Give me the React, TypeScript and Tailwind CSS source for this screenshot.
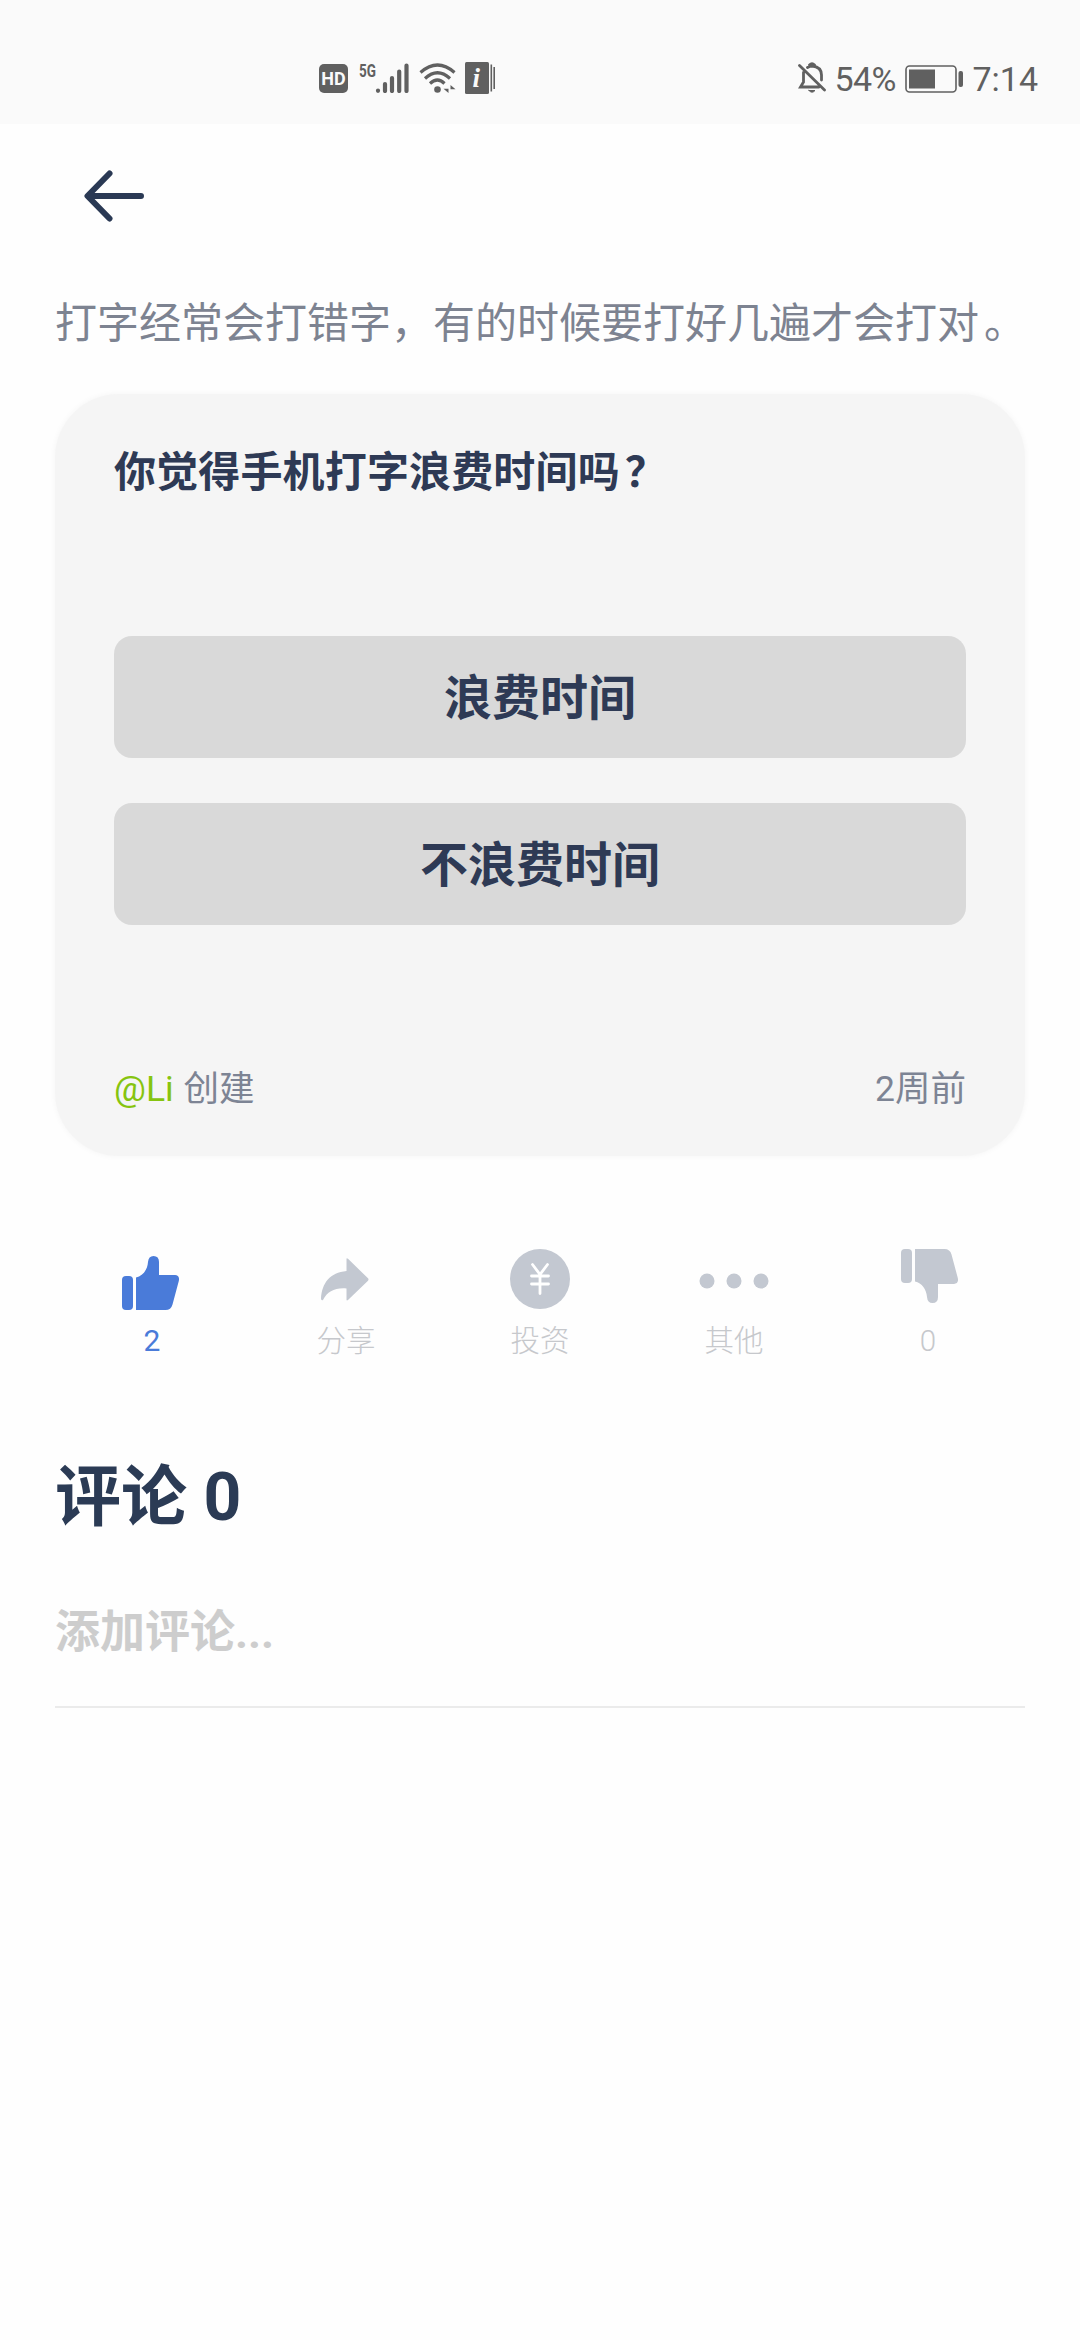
import React from 'react';

interface IconProps {
  className?: string;
}

interface Action {
  label: string;
  icon: React.ReactNode;
  active?: boolean;
}

const SignalIcon: React.FC<IconProps> = ({ className }) => (
  <svg viewBox="0 0 34 30" className={className} fill="none" stroke="currentColor" strokeWidth="4.200" strokeLinecap="round">
    <path d="M3 27.600v.2M10 21v7M17 15v13M24.200 8.500v19.500M31.500 2.500v25.500" />
  </svg>
);

const WifiIcon: React.FC<IconProps> = ({ className }) => (
  <svg viewBox="0 0 38 30" className={className} fill="none" stroke="currentColor" strokeWidth="3.200">
    <path d="M1.500 9.500Q18.500-5.500 35.500 9.500M6 15.500Q18.500 4 31 15.500M11 20.500Q18.500 13.500 25.500 20.500" />
    <circle cx="18.500" cy="26.500" r="3.300" fill="currentColor" stroke="none" />
    <path d="M29.500 22v8l-5-4.200h5zM31.500 30v-8l5 4.200h-5z" fill="currentColor" stroke="none" />
  </svg>
);

const InfoCardIcon: React.FC<IconProps> = ({ className }) => (
  <svg viewBox="0 0 30 32" className={className} fill="currentColor">
    <rect x="0" y="0" width="24" height="32" rx="1.500" />
    <rect x="25.500" y="2.500" width="1.600" height="27" />
    <rect x="28.400" y="5" width="1.600" height="22" />
    <text x="7.500" y="25" fill="#fafafa" className="font-['Liberation_Serif'] text-[27px] font-bold italic">i</text>
  </svg>
);

const BellOffIcon: React.FC<IconProps> = ({ className }) => (
  <svg viewBox="0 0 28 32" className={className} fill="none" stroke="currentColor" strokeWidth="2.800" strokeLinecap="round">
    <path d="M5.500 10.500V20L2.500 25H21M9.500 5.500Q12 4 14 4Q23.500 5 23.500 13v5M11.500 3Q14 .500 16.500 3M1.500 3.500L26.500 28" />
    <path d="M11 28.500h6q-3 3.500-6 0z" fill="currentColor" strokeWidth="1" />
  </svg>
);

const BatteryIcon: React.FC<IconProps> = ({ className }) => (
  <svg viewBox="0 0 59 28" className={className} fill="currentColor">
    <rect x="1" y="1" width="50" height="26" rx="3.500" fill="none" stroke="currentColor" strokeWidth="1.600" />
    <rect x="4" y="4.500" width="26" height="19" />
    <rect x="53.500" y="6" width="4.500" height="16" rx="2" />
  </svg>
);

const BackIcon: React.FC<IconProps> = ({ className }) => (
  <svg viewBox="0 0 60 52" className={className} fill="none" stroke="currentColor" strokeWidth="6" strokeLinecap="round" strokeLinejoin="round">
    <path d="M57 26H4M25.500 3.500L3.500 26l22 22.500" />
  </svg>
);

const ThumbIcon: React.FC<IconProps> = ({ className }) => (
  <svg viewBox="0 0 57 54" className={className} fill="currentColor">
    <rect x="0" y="20" width="11" height="34" rx="4" />
    <path d="M14 54V21.500C21 20 25.500 13.500 26 6Q26.500 0 31.500 0Q37 0 37 6V19H53Q58 19.500 56.800 25L50.500 48.500Q49 54 43.500 54Z" />
  </svg>
);

const ShareIcon: React.FC<IconProps> = ({ className }) => (
  <svg viewBox="0 0 48 43" className={className} fill="currentColor">
    <path d="M25.500 1Q25.500-.500 27 .800L47 20.300Q48 21.500 47 22.700L27 42Q25.500 43 25.500 41.500V30.500C14 29.500 6.500 33.500 2 42Q0 43 0 40.500C1 25 9 14.500 25.500 13Z" />
  </svg>
);

const YenIcon: React.FC<IconProps> = ({ className }) => (
  <svg viewBox="0 0 60 60" className={className}>
    <circle cx="30" cy="30" r="30" fill="currentColor" />
    <path d="M22.500 15.500l7.500 10 7.500-10M30 26v18.500M21.500 27h17M21.500 35h17" fill="none" stroke="#fff" strokeWidth="2.800" strokeLinecap="round" />
  </svg>
);

const MoreIcon: React.FC<IconProps> = ({ className }) => (
  <svg viewBox="0 0 70 16" className={className} fill="currentColor">
    <circle cx="8" cy="8" r="7.500" />
    <circle cx="35" cy="8" r="7.500" />
    <circle cx="62" cy="8" r="7.500" />
  </svg>
);

const actions: Action[] = [
  { label: '2', icon: <ThumbIcon className="w-[57px] h-[54px] mt-[7px] mr-[3px]" />, active: true },
  { label: '分享', icon: <ShareIcon className="w-12 h-[43px] mt-[9px] mr-0.5" /> },
  { label: '投资', icon: <YenIcon className="w-[60px] h-[60px]" /> },
  { label: '其他', icon: <MoreIcon className="w-[70px] h-4 mt-6" /> },
  { label: '0', icon: <ThumbIcon className="w-[57px] h-[54px] ml-0.5 -scale-y-100" /> },
];

const options = ['浪费时间', '不浪费时间'];

const StatusBar: React.FC = () => (
  <div className="flex h-[124px] items-start bg-[#fafafa] pl-[319px] pr-[42px] pt-[62px] text-[#606060]">
    <div className="mt-0.5 flex h-[29px] w-[29px] items-center justify-center rounded-[5px] bg-[#606060] font-['Roboto'] text-[18px] font-bold text-[#fafafa]">HD</div>
    <span className="ml-[11px] w-5 origin-left scale-x-75 whitespace-nowrap text-[18px] font-bold leading-[18px]">5G</span>
    <SignalIcon className="-ml-1 mt-px h-[30px] w-[34px]" />
    <WifiIcon className="ml-[10px] mt-px h-[30px] w-[38px]" />
    <InfoCardIcon className="ml-[8px] h-8 w-[30px]" />
    <div className="ml-auto flex items-start">
      <BellOffIcon className="h-8 w-7" />
      <span className="ml-[8px] w-[61px] whitespace-nowrap text-[34px] leading-[34px] tracking-[-0.6px]">54%</span>
      <BatteryIcon className="ml-[10px] mt-[3px] h-7 w-[59px]" />
      <span className="ml-[8px] whitespace-nowrap text-[34px] leading-[34px]">7:14</span>
    </div>
  </div>
);

const PollCard: React.FC = () => (
  <section className="mt-[40px] flex h-[762px] flex-col rounded-[64px] bg-[#f5f5f5] px-[59px] shadow-[0_0_6px_#f5f5f5]">
    <h1 className="mt-[49px] text-[42px] font-bold leading-[60px] tracking-[0.15px] text-[#2e3a55]">
      你觉得手机打字浪费时间吗<span className="ml-[5px]">？</span>
    </h1>
    <div className="mt-[133px] flex flex-col gap-[45px]">
      {options.map((option) => (
        <button key={option} className="h-[122px] rounded-[18px] bg-[#d9d9d9] pt-[3px] text-[48px] font-bold text-[#2e3a55]">
          {option}
        </button>
      ))}
    </div>
    <div className="mt-[139px] flex justify-between text-[35.5px] leading-[50px] text-[#7d8494]">
      <p><span className="text-[#86c40f]">@Li</span> <span className="ml-px">创建</span></p>
      <span>2周前</span>
    </div>
  </section>
);

const App: React.FC = () => {
  return (
    <div className="min-h-[2340px] w-[1080px] bg-[#fefefe] font-['Roboto','Noto_Sans_CJK_SC',sans-serif]">
      <StatusBar />
      <main className="px-[55px]">
        <button className="ml-[29px] mt-[46px] block text-[#2a3954]" aria-label="返回">
          <BackIcon className="h-[52px] w-[60px]" />
        </button>
        <p className="mt-[72px] whitespace-nowrap text-[42px] leading-[60px] text-[#7d8391]">
          打字经常会打错字，有的时候要打好几遍才会打对<span className="ml-[5px]">。</span>
        </p>
        <PollCard />
        <div className="mt-[93px] grid grid-cols-5">
          {actions.map((action) => (
            <button
              key={action.label}
              className={action.active ? 'flex flex-col items-center text-[#4a7bd9]' : 'flex flex-col items-center text-[#c3c8d1]'}
            >
              <span className="flex h-[60px] items-start">{action.icon}</span>
              <span className={action.active ? 'mt-3 text-[30px] leading-10' : 'mt-3 text-[29.5px] font-light leading-10 text-[#c6c8cc]'}>
                {action.label}
              </span>
            </button>
          ))}
        </div>
        <h2 className="mt-[97px] text-[66px] font-bold leading-[80px] text-[#2b3b55]">评论 0</h2>
        <div className="mt-[69px] h-[101px] border-b-2 border-[#ebebeb]">
          <input
            className="block h-[52px] w-full bg-transparent text-[45px] font-bold leading-[52px] outline-none placeholder:text-[#cdcdcd]"
            placeholder="添加评论..."
          />
        </div>
      </main>
    </div>
  );
};

export default App;
